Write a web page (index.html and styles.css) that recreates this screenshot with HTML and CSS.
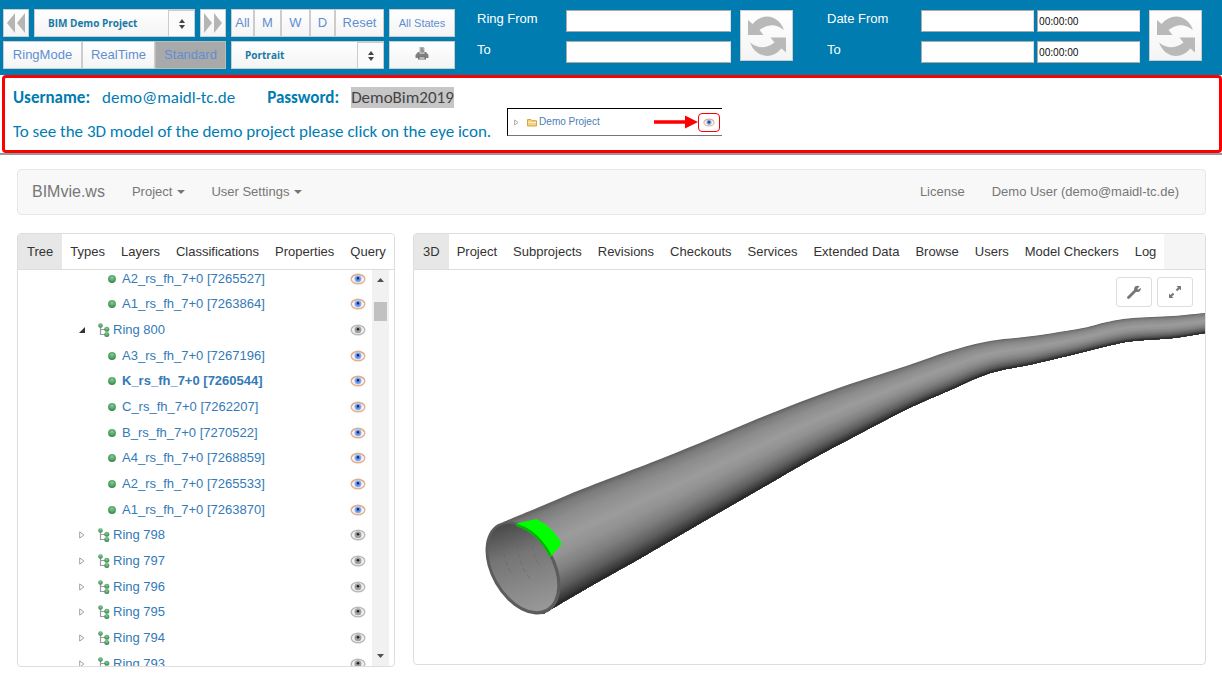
FILE: index.html
```html
<!DOCTYPE html>
<html lang="en">
<head>
<meta charset="utf-8">
<title>BIMvie.ws</title>
<link rel="stylesheet" href="styles.css">
</head>
<body>
<svg class="sprite" aria-hidden="true">
  <defs>
    <radialGradient id="green" cx=".5" cy=".35" r=".65"><stop offset="0" stop-color="#8fc79a"/><stop offset=".6" stop-color="#4fa563"/><stop offset="1" stop-color="#35844a"/></radialGradient>
    <radialGradient id="iris" cx=".5" cy=".5" r=".5"><stop offset="0" stop-color="#2d55b0"/><stop offset=".4" stop-color="#5585e4"/><stop offset="1" stop-color="#a3c1f6"/></radialGradient>
  </defs>
  <symbol id="dot" viewBox="0 0 8 8"><circle cx="4" cy="4" r="3.9" fill="url(#green)"/></symbol>
  <symbol id="branch" viewBox="0 0 12 14"><path d="M2.5 4v7.5H7M2.5 6.5H7" fill="none" stroke="#9a9aa5" stroke-width="1.2"/><circle cx="2.5" cy="2.5" r="2.3" fill="url(#green)"/><circle cx="8.8" cy="6.2" r="2.5" fill="url(#green)"/><circle cx="8.8" cy="11.4" r="2.5" fill="url(#green)"/></symbol>
  <symbol id="closed" viewBox="0 0 6 8"><path d="M.7.9 4.9 4 .7 7.1z" fill="#fff" stroke="#a0a0a0"/></symbol>
  <symbol id="open" viewBox="0 0 6 6"><path d="M6 0v6H0z" fill="#333"/></symbol>
  <symbol id="eye" viewBox="0 0 16 12"><ellipse cx="8" cy="6" rx="6.800" ry="4.700" fill="#f8f5f4" stroke="#e6b08c" stroke-width="1.4"/><path d="M1.5 5C4 .8 12 .8 14.5 5" fill="none" stroke="#c8a898" stroke-width=".8"/><circle cx="8" cy="5.8" r="3.6" fill="url(#iris)"/><circle cx="8" cy="5.2" r="1.1" fill="#1c2340"/></symbol>
  <symbol id="eye-off" viewBox="0 0 16 12"><ellipse cx="8" cy="6" rx="6.800" ry="4.700" fill="#f2f2f2" stroke="#b9b9b9" stroke-width="1.4"/><circle cx="8" cy="5.8" r="3.5" fill="#a0a0a0"/><circle cx="8" cy="5.2" r="1.3" fill="#222"/></symbol>
  <symbol id="updown" viewBox="0 0 6 10"><path d="M0 4 3 0l3 4zM0 6h6l-3 4z" fill="#444"/></symbol>
  <symbol id="refresh" viewBox="0 0 38 40"><g fill="#b9b9b9"><path id="half" d="M0 4 4.500 8Q11 .5 19 .5 31 1 36 14 24 4.500 11.500 14L15.500 19H0z"/><path transform="rotate(180 19 20.2)" d="M0 4 4.500 8Q11 .5 19 .5 31 1 36 14 24 4.500 11.500 14L15.500 19H0z"/></g></symbol>
</svg>

<header class="toolbar">
  <div class="tools">
    <div class="row">
      <button class="btn arrow" aria-label="Previous"><svg width="18" height="20" viewBox="0 0 18 20"><path d="M8 0v20L0 10zM18 0v20l-8-10z" fill="#b5b5b5"/></svg></button>
      <div class="picker"><select aria-label="Project"><option>BIM Demo Project</option></select><span class="knob"><svg width="6" height="10"><use href="#updown"/></svg></span></div>
      <button class="btn arrow" aria-label="Next"><svg width="18" height="20" viewBox="0 0 18 20"><path d="M0 0l8 10-8 10zM10 0l8 10-8 10z" fill="#b5b5b5"/></svg></button>
    </div>
    <div class="joined period">
      <button class="btn">All</button><button class="btn">M</button><button class="btn">W</button><button class="btn">D</button><button class="btn">Reset</button>
    </div>
    <button class="btn small">All States</button>
    <div class="joined modes">
      <button class="btn">RingMode</button><button class="btn">RealTime</button><button class="btn active">Standard</button>
    </div>
    <div class="picker"><select aria-label="Orientation"><option>Portrait</option></select><span class="knob"><svg width="6" height="10"><use href="#updown"/></svg></span></div>
    <button class="btn print" aria-label="Print"><svg width="14" height="13" viewBox="0 0 14 13"><path d="M4.500 0h4l1 1v5h-5z" fill="#b0b0b0"/><path d="M6 2h2M6 4h3" stroke="#777"/><path d="M3 5h1.500v1.500h5V5H11l2.500 3v3H.5V8z" fill="#808080"/><path d="M3 9.500h8v3H3z" fill="#707070"/><path d="M4.500 11h5" stroke="#fff"/></svg></button>
  </div>

  <form class="range rings">
    <label for="ring-from">Ring From</label><input id="ring-from" type="text">
    <label for="ring-to">To</label><input id="ring-to" type="text">
    <button type="button" class="btn reload" aria-label="Apply rings"><svg width="38" height="40"><use href="#refresh"/></svg></button>
  </form>
  <form class="range dates">
    <label for="date-from">Date From</label><input id="date-from" type="text"><input class="time" type="text" value="00:00:00" aria-label="Time from">
    <label for="date-to">To</label><input id="date-to" type="text"><input class="time" type="text" value="00:00:00" aria-label="Time to">
    <button type="button" class="btn reload" aria-label="Apply dates"><svg width="38" height="40"><use href="#refresh"/></svg></button>
  </form>
</header>

<section class="notice">
  <p><b class="user">Username:</b><span class="mail">demo@maidl-tc.de</span><b>Password:</b><mark>DemoBim2019</mark></p>
  <div class="hint">
    <p>To see the 3D model of the demo project please click on the eye icon.</p>
    <div class="sample">
      <svg width="5" height="7" viewBox="0 0 6 8"><use href="#closed"/></svg>
      <svg class="folder" width="10" height="9" viewBox="0 0 10 9"><path d="M.5 8V1.500h3.500l1 1.200h4.500V8z" fill="#f6d27c" stroke="#d8a545"/><path d="M1 4.500h8" stroke="#fff0c0"/></svg>
      <span>Demo Project</span>
      <svg class="pointer" width="44" height="14" viewBox="0 0 44 14"><path d="M0 5.200h31V.5L44 7 31 13.500V8.800H0z" fill="#f00"/></svg>
      <span class="ringed"><svg width="12" height="9"><use href="#eye"/></svg></span>
    </div>
  </div>
</section>

<main>
  <nav class="navbar">
    <a class="brand" href="#">BIMvie.ws</a>
    <a class="menu" href="#">Project<i></i></a>
    <a class="menu" href="#">User Settings<i></i></a>
    <a class="license" href="#">License</a>
    <a href="#">Demo User (demo@maidl-tc.de)</a>
  </nav>
  <div class="panels">
    <section class="panel">
      <nav class="tabs"><a class="on" href="#">Tree</a><a href="#">Types</a><a href="#">Layers</a><a href="#">Classifications</a><a href="#">Properties</a><a href="#">Query</a></nav>
      <div class="scroller">
        <ul class="tree">
          <li class="leaf"><svg class="dot"><use href="#dot"/></svg><a href="#">A2_rs_fh_7+0 [7265527]</a><svg class="eye"><use href="#eye"/></svg></li>
          <li class="leaf"><svg class="dot"><use href="#dot"/></svg><a href="#">A1_rs_fh_7+0 [7263864]</a><svg class="eye"><use href="#eye"/></svg></li>
          <li><svg class="fold"><use href="#open"/></svg><svg class="branch"><use href="#branch"/></svg><a href="#">Ring 800</a><svg class="eye"><use href="#eye-off"/></svg></li>
          <li class="leaf"><svg class="dot"><use href="#dot"/></svg><a href="#">A3_rs_fh_7+0 [7267196]</a><svg class="eye"><use href="#eye"/></svg></li>
          <li class="leaf chosen"><svg class="dot"><use href="#dot"/></svg><a href="#">K_rs_fh_7+0 [7260544]</a><svg class="eye"><use href="#eye"/></svg></li>
          <li class="leaf"><svg class="dot"><use href="#dot"/></svg><a href="#">C_rs_fh_7+0 [7262207]</a><svg class="eye"><use href="#eye"/></svg></li>
          <li class="leaf"><svg class="dot"><use href="#dot"/></svg><a href="#">B_rs_fh_7+0 [7270522]</a><svg class="eye"><use href="#eye"/></svg></li>
          <li class="leaf"><svg class="dot"><use href="#dot"/></svg><a href="#">A4_rs_fh_7+0 [7268859]</a><svg class="eye"><use href="#eye"/></svg></li>
          <li class="leaf"><svg class="dot"><use href="#dot"/></svg><a href="#">A2_rs_fh_7+0 [7265533]</a><svg class="eye"><use href="#eye"/></svg></li>
          <li class="leaf"><svg class="dot"><use href="#dot"/></svg><a href="#">A1_rs_fh_7+0 [7263870]</a><svg class="eye"><use href="#eye"/></svg></li>
          <li><svg class="fold"><use href="#closed"/></svg><svg class="branch"><use href="#branch"/></svg><a href="#">Ring 798</a><svg class="eye"><use href="#eye-off"/></svg></li>
          <li><svg class="fold"><use href="#closed"/></svg><svg class="branch"><use href="#branch"/></svg><a href="#">Ring 797</a><svg class="eye"><use href="#eye-off"/></svg></li>
          <li><svg class="fold"><use href="#closed"/></svg><svg class="branch"><use href="#branch"/></svg><a href="#">Ring 796</a><svg class="eye"><use href="#eye-off"/></svg></li>
          <li><svg class="fold"><use href="#closed"/></svg><svg class="branch"><use href="#branch"/></svg><a href="#">Ring 795</a><svg class="eye"><use href="#eye-off"/></svg></li>
          <li><svg class="fold"><use href="#closed"/></svg><svg class="branch"><use href="#branch"/></svg><a href="#">Ring 794</a><svg class="eye"><use href="#eye-off"/></svg></li>
          <li><svg class="fold"><use href="#closed"/></svg><svg class="branch"><use href="#branch"/></svg><a href="#">Ring 793</a><svg class="eye"><use href="#eye-off"/></svg></li>
        </ul>
        <div class="bar">
          <svg width="7" height="4" viewBox="0 0 7 4"><path d="M0 4 3.500 0 7 4z" fill="#505050"/></svg>
          <span class="thumb"></span>
          <svg width="7" height="4" viewBox="0 0 7 4"><path d="M0 0h7L3.500 4z" fill="#505050"/></svg>
        </div>
      </div>
    </section>
    <section class="panel">
      <nav class="tabs"><a class="on" href="#">3D</a><a href="#">Project</a><a href="#">Subprojects</a><a href="#">Revisions</a><a href="#">Checkouts</a><a href="#">Services</a><a href="#">Extended Data</a><a href="#">Browse</a><a href="#">Users</a><a href="#">Model Checkers</a><a href="#">Log</a></nav>
      <div class="viewer">
        <svg class="scene" viewBox="414 270 791 394" role="img" aria-label="Tunnel model">
          <defs>
            <linearGradient id="bore" x1="475" y1="560" x2="570" y2="580" gradientUnits="userSpaceOnUse"><stop offset="0" stop-color="#484848"/><stop offset=".35" stop-color="#757575"/><stop offset="1" stop-color="#9a9a9a"/></linearGradient>
          </defs>
          <g id="tube"></g>
          <g transform="rotate(60 523 568)">
            <ellipse cx="523" cy="568" rx="50.500" ry="32" fill="#5c5c5c"/>
            <ellipse cx="522.500" cy="568" rx="47.500" ry="29" fill="url(#bore)"/>
          </g>
          <path d="M503 545q1 17 9 30M518 545q0 18 12 34M532 545q2 12 8 22" fill="none" stroke="#666" stroke-width=".6" stroke-dasharray="5 3"/>
          <path d="M516.500 523.500 536.500 519Q553 527 562 544L550 557Q538 533 516.500 526z" fill="#0f0"/>
          <path d="M516.500 523.500Q538 530 551 554L550 557Q538 533 516.500 526z" fill="#00b400"/>
        </svg>
        <div class="controls">
          <button aria-label="Settings"><svg width="14" height="14" viewBox="0 0 14 14"><path d="M1.500 12.500 8 6" stroke="#777" stroke-width="2.800" stroke-linecap="round"/><path d="M12.500 1.500 10.500 3.500l.3.900.9.200 2-1.800c.5 2.200-1 4.500-3.400 4.200C7.500 7 6.500 5 7.300 3 8 1 10.200 0 12.500 1.500z" fill="#777"/></svg></button>
          <button aria-label="Fullscreen"><svg width="14" height="14" viewBox="0 0 14 14"><path d="M8.500 1H13v4.500l-1.500-1.500-2.300 2.300-1.500-1.500L10 2.500zM5.500 13H1V8.500L2.500 10l2.300-2.300 1.500 1.500L4 11.500z" fill="#777"/></svg></button>
        </div>
      </div>
    </section>
  </div>
</main>
<script src="scene.js"></script>
</body>
</html>
```
FILE: styles.css
```css
* { box-sizing: border-box; }
body { margin: 0; background: #fff; font: 13px/18px "Liberation Sans", Arial, sans-serif; color: #333; }
a { color: inherit; text-decoration: none; }
p, ul { margin: 0; padding: 0; list-style: none; }
button, input, select { font: inherit; margin: 0; border-radius: 0; }
svg { display: block; flex: none; }
.sprite { position: absolute; width: 0; height: 0; }

.toolbar { display: flex; align-items: flex-start; background: #007cb1; padding: 9px 3px 6px; }
.tools { display: grid; grid-template-columns: 223px 153px 66px; grid-auto-rows: 28px; gap: 4px 5px; }
.row { display: flex; gap: 5px; }
.joined { display: grid; }
.period { grid-template-columns: 23fr 27fr 29fr 25fr 49fr; }
.modes { grid-template-columns: 79fr 73fr 71fr; }
.btn { display: flex; align-items: center; justify-content: center; min-width: 0; padding: 0; border: 1px solid #ccc; background: linear-gradient(#fff, #f4f4f4); color: #5f8fd3; }
.btn.arrow { width: 26px; }
.btn.small { font-size: 11px; }
.btn.active { background: #a9a9a9; border-color: #bbb; }
.btn.print { padding-bottom: 4px; }
.picker { position: relative; display: flex; flex: 1; }
.picker select { appearance: none; flex: 1; width: 100%; border: 1px solid #ccc; background: linear-gradient(#fff, #f4f4f4); color: #1779a5; font: bold 10px/16px "Open Sans", sans-serif; padding: 0 30px 0 13px; }
.knob { position: absolute; top: 1px; right: 0; bottom: 0; width: 27px; display: flex; align-items: center; justify-content: center; border: 1px solid #ccc; background: #fbfbfb; pointer-events: none; }

.range { display: grid; gap: 9px 3px; grid-auto-rows: 22px; padding-top: 1px; color: #fff; }
.rings { grid-template-columns: 86px 165px 59px; margin-left: 22px; }
.dates { grid-template-columns: 91px 113px 103px 59px; margin-left: 34px; }
.range label { line-height: 18px; }
.range input { width: 100%; min-width: 0; border: 1px solid #aaa; border-right-color: #ddd; background: #fff; padding: 0 5px; }
.range .time { font: 10px/16px "Open Sans", sans-serif; color: #000; padding: 0 1px; }
.reload { grid-row: 1 / 3; width: 53px; height: 51px; justify-self: end; }
.rings .reload { grid-column: 3; }
.dates .reload { grid-column: 4; }

.notice { margin-left: 2px; border: 3px solid #f00; border-radius: 4px; padding: 9px 8px 8px; font: 17px/21px Carlito, Lato, sans-serif; color: #007cb1; }
.notice p { display: flex; }
.notice .user { margin-right: 12px; }
.notice .mail { margin-right: 32px; }
.notice mark { background: #c6c6c6; color: #444; margin-left: 12px; }
.hint { display: flex; align-items: flex-start; gap: 16px; }
.hint p { padding-top: 13px; }
.sample { display: flex; align-items: center; width: 215px; height: 28px; padding: 0 2px 0 6px; border: solid #000; border-width: 1px 0 1px 1px; border-bottom-color: #777; font: 10px/14px "Liberation Sans", Arial, sans-serif; color: #4a7db5; }
.folder { margin: 0 2px 0 8px; }
.pointer { margin-left: auto; }
.ringed { border: 1px solid #f00; border-radius: 4px; padding: 4px; }

main { border-top: 2px solid #999; padding: 14px 16px 11px 17px; }
.navbar { display: flex; align-items: center; height: 46px; background: #f8f8f8; border: 1px solid #e7e7e7; border-radius: 4px; padding: 0 26px 0 14px; color: #777; }
.brand { font-size: 16px; margin-right: 27px; }
.menu { display: flex; align-items: center; gap: 5px; margin-right: 26px; }
.menu i { border: solid transparent; border-width: 4px 4px 0; border-top-color: #777; }
.license { margin: 0 27px 0 auto; }
.panels { display: grid; grid-template-columns: 378px minmax(0, 1fr); gap: 18px; align-items: start; margin-top: 18px; }
.panel { border: 1px solid #ddd; border-radius: 4px; overflow: hidden; }
.tabs { display: flex; background: #f5f5f5; border-bottom: 1px solid #ddd; line-height: 35px; }
.tabs a { background: #fff; padding: 0 8px; white-space: nowrap; }
.tabs .on { background: #e7e7e7; padding: 0 9px; }

.scroller { display: flex; height: 396px; overflow: hidden; padding-right: 5px; }
.tree { flex: 1; display: grid; grid-auto-rows: 25px 26px 26px; margin-top: -4px; color: #337ab7; }
.tree li { display: flex; align-items: center; padding: 0 6px 0 61px; }
.tree .leaf { padding-left: 90px; }
.tree .chosen { font-weight: bold; }
.dot { width: 8px; height: 8px; margin-right: 6px; }
.fold { width: 6px; height: 8px; margin-right: 13px; }
.branch { width: 12px; height: 14px; margin-right: 3px; }
.eye { width: 16px; height: 12px; margin-left: auto; }
.bar { width: 17px; background: #f1f1f1; display: flex; flex-direction: column; align-items: center; padding: 8px 0; }
.thumb { width: 13px; height: 19px; background: #c1c1c1; margin: 20px 0 auto; }

.viewer { position: relative; }
.scene { width: 100%; height: auto; }
.controls { position: absolute; top: 7px; right: 12px; display: flex; gap: 5px; }
.controls button { display: flex; align-items: center; justify-content: center; width: 36px; height: 30px; border: 1px solid #ddd; border-radius: 3px; background: #fff; padding: 0; }
```
FILE: scene.js
```js
// Edges of the tunnel hull, front to back, as paired points.
const high = [[503,522],[537,508],[570,494],[603,481],[650,463],[700,443],[750,422],[800,402],[850,384],[900,368],[950,351],[990,341],[1033,336],[1083,328],[1107,322],[1133,318],[1173,316],[1205,313]];
const low = [[543,614],[570,598],[603,579],[637,560],[680,535],[725,509],[765,486],[810,460],[855,436],[907,409],[950,390],[990,373],[1033,364],[1083,352],[1107,346],[1133,341],[1173,338],[1205,333]];
// Grey level against the position between the upper and the lower edge.
const shade = [[0, 95], [0.06, 122], [0.2, 142], [0.4, 156], [0.55, 146], [0.7, 126], [0.85, 94], [0.95, 58], [1, 35]];

function grey(t) {
  for (let i = 1; i < shade.length; i++) {
    const [a, va] = shade[i - 1], [b, vb] = shade[i];
    if (t <= b) return Math.round(va + (vb - va) * (t - a) / (b - a));
  }
  return shade[shade.length - 1][1];
}

function line(t) {
  return high.map((p, i) => [p[0] + (low[i][0] - p[0]) * t, p[1] + (low[i][1] - p[1]) * t]);
}

function smooth(points) {
  let d = "";
  for (let i = 0; i < points.length - 1; i++) {
    const p0 = points[i - 1] || points[i], p1 = points[i], p2 = points[i + 1], p3 = points[i + 2] || p2;
    d += `C${p1[0] + (p2[0] - p0[0]) / 6} ${p1[1] + (p2[1] - p0[1]) / 6} ${p2[0] - (p3[0] - p1[0]) / 6} ${p2[1] - (p3[1] - p1[1]) / 6} ${p2[0]} ${p2[1]}`;
  }
  return d;
}

const bands = 48;
const tube = document.getElementById("tube");
const base = line(1).reverse();
for (let k = 0; k < bands; k++) {
  const upper = line(k / bands);
  const v = grey((k + 0.5) / bands);
  const path = document.createElementNS("http://www.w3.org/2000/svg", "path");
  path.setAttribute("d", `M${upper[0]}${smooth(upper)}L${base[0]}${smooth(base)}Z`);
  path.setAttribute("fill", `rgb(${v},${v},${v})`);
  tube.appendChild(path);
}
```
